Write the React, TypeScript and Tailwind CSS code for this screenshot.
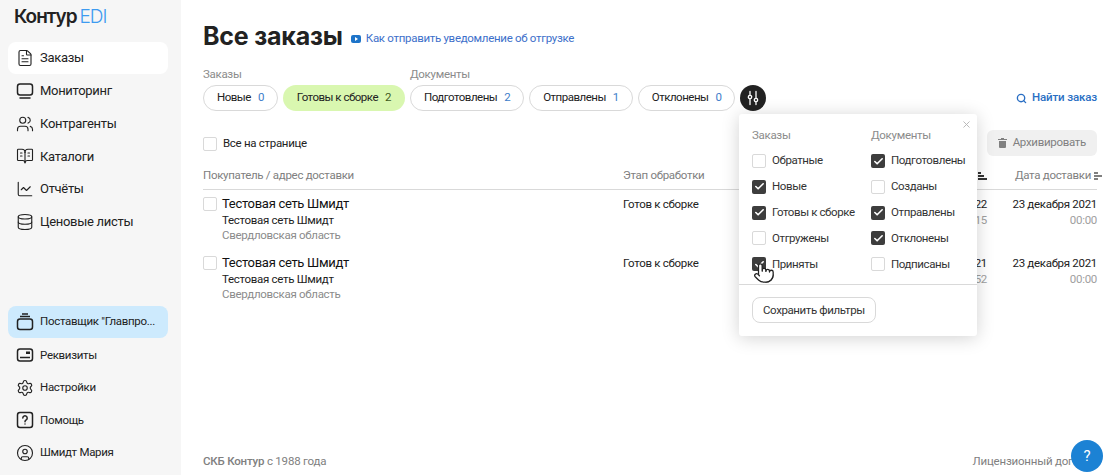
import { BookOpenText, ChartLine, Check, CircleUser, Database, FileText, Pointer, Search, Settings, Users, X } from 'lucide-react'
import type { ReactNode } from 'react'

const ICON = { size: 18, strokeWidth: 1.5 }

const Monitor = () => (
  <svg width="18" height="18" viewBox="0 0 18 18" fill="none" stroke="currentColor" strokeWidth="1.5">
    <rect x="1.5" y="2" width="15" height="11" rx="2.5" />
    <path d="M4 16h10" strokeLinecap="round" />
  </svg>
)

const Account = () => (
  <svg width="18" height="18" viewBox="0 0 18 18" fill="none" stroke="currentColor" strokeWidth="1.5">
    <rect x="1.5" y="6" width="15" height="10.5" rx="2.5" />
    <path d="M4 3.5h10M6 1h6" />
  </svg>
)

const Requisites = () => (
  <svg width="18" height="18" viewBox="0 0 18 18" fill="none" stroke="currentColor" strokeWidth="1.5">
    <rect x="1.5" y="3" width="15" height="12" rx="2.5" />
    <path d="M4 11.5h10" />
    <rect x="10" y="5.5" width="4" height="2.5" fill="currentColor" stroke="none" />
  </svg>
)

const HelpSquare = () => (
  <svg width="18" height="18" viewBox="0 0 18 18" fill="none" stroke="currentColor" strokeWidth="1.5">
    <rect x="1.5" y="1.5" width="15" height="15" rx="2.5" />
    <path d="M6.8 7a2.2 2.2 0 1 1 3.4 1.9c-.8.5-1.2.9-1.2 1.9" strokeLinecap="round" />
    <path d="M9 12.6v1" />
  </svg>
)

const Sliders = () => (
  <svg width="14" height="16" viewBox="0 0 14 16" fill="none" stroke="currentColor" strokeWidth="1.3" strokeLinecap="round">
    <path d="M4 1.5v3.5M4 9v5.5M10 1.5V8M10 12v2.5" />
    <circle cx="4" cy="7" r="1.7" />
    <circle cx="10" cy="10" r="1.7" />
  </svg>
)

const TrashSolid = () => (
  <svg width="9" height="10" viewBox="0 0 9 10" fill="currentColor">
    <path d="M3 0h3v1h3v1H0V1h3zM1 3h7v6a1 1 0 0 1-1 1H2a1 1 0 0 1-1-1z" />
  </svg>
)

const SortIcon = ({ flip }: { flip?: boolean }) => (
  <svg width="9" height="8" viewBox="0 0 9 8" fill="currentColor">
    {flip ? (
      <path d="M0 0h4v2H0zM0 3h8v2H0zM0 6h4v2H0z" />
    ) : (
      <path d="M0 0h3v2H0zM0 3h6v2H0zM0 6h9v2H0z" />
    )}
  </svg>
)

const NAV: { label: string; icon: ReactNode; active?: boolean }[] = [
  { label: 'Заказы', icon: <FileText {...ICON} />, active: true },
  { label: 'Мониторинг', icon: <Monitor /> },
  { label: 'Контрагенты', icon: <Users {...ICON} /> },
  { label: 'Каталоги', icon: <BookOpenText {...ICON} /> },
  { label: 'Отчёты', icon: <ChartLine {...ICON} /> },
  { label: 'Ценовые листы', icon: <Database {...ICON} /> },
]

const NAV_BOTTOM: { label: string; icon: ReactNode }[] = [
  { label: 'Реквизиты', icon: <Requisites /> },
  { label: 'Настройки', icon: <Settings {...ICON} /> },
  { label: 'Помощь', icon: <HelpSquare /> },
  { label: 'Шмидт Мария', icon: <CircleUser {...ICON} /> },
]

const ORDER_FILTERS = [
  { label: 'Новые', count: 0 },
  { label: 'Готовы к сборке', count: 2, active: true },
]

const DOC_FILTERS = [
  { label: 'Подготовлены', count: 2 },
  { label: 'Отправлены', count: 1 },
  { label: 'Отклонены', count: 0 },
]

const POPUP_ORDERS = [
  { label: 'Обратные', on: false },
  { label: 'Новые', on: true },
  { label: 'Готовы к сборке', on: true },
  { label: 'Отгружены', on: false },
  { label: 'Приняты', on: true },
]

const POPUP_DOCS = [
  { label: 'Подготовлены', on: true },
  { label: 'Созданы', on: false },
  { label: 'Отправлены', on: true },
  { label: 'Отклонены', on: true },
  { label: 'Подписаны', on: false },
]

const ROWS = [
  { date: '20 января 2022', time: '10:15' },
  { date: '23 декабря 2021', time: '14:52' },
]

function Box({ on }: { on?: boolean }) {
  if (on) {
    return (
      <span className="flex h-[14px] w-[14px] shrink-0 items-center justify-center rounded-[2px] bg-[#3d3d3d] text-white">
        <Check size={11} strokeWidth={3.5} />
      </span>
    )
  }
  return <span className="block h-[14px] w-[14px] shrink-0 rounded-[2px] border border-[#d9d9d9] bg-white" />
}

function Pill({ label, count, active }: { label: string; count: number; active?: boolean }) {
  return (
    <span
      className={`flex h-[26px] items-center gap-[7px] rounded-full tracking-[-0.5px] ${
        active ? 'bg-[#d9f7b0] px-[14px] text-[#222]' : 'border border-[#d9d9d9] px-[13px] text-[#222]'
      }`}
    >
      {label}
      <span className={active ? 'text-[#3d5a1e]' : 'text-[#3d7dca]'}>{count}</span>
    </span>
  )
}

function PopupColumn({ title, items, width }: { title: string; items: { label: string; on: boolean }[]; width: string }) {
  return (
    <div className={`shrink-0 ${width}`}>
      <div className="mb-[12px] leading-[14px] text-[#8b8b8b]">{title}</div>
      <div className="flex flex-col gap-[11.8px]">
        {items.map((item) => (
          <label key={item.label} className="flex h-[14px] items-center gap-[6px] whitespace-nowrap tracking-[-0.4px] text-[#333]">
            <Box on={item.on} />
            {item.label}
          </label>
        ))}
      </div>
    </div>
  )
}

export default function App() {
  return (
    <div className="relative flex h-[475px] w-[1106px] overflow-hidden bg-white font-['Roboto',sans-serif] text-[11.5px] tracking-[-0.3px] text-[#222]">
      <aside className="flex w-[181px] shrink-0 flex-col bg-[#f6f6f6] pr-[13px] pl-2">
        <div className="flex h-[42px] items-center gap-[3px] pb-[8px] pl-[6px] font-['Inter',sans-serif] text-[19px] tracking-[-1px]">
          <span className="font-semibold">Контур</span>
          <span className="font-light text-[#3d9bf0]">EDI</span>
        </div>
        <nav className="flex flex-col gap-[0.8px] text-[13px]">
          {NAV.map((item) => (
            <a
              key={item.label}
              className={`flex h-[32px] items-center gap-[6px] rounded-lg pl-[8px] ${item.active ? 'bg-white' : ''}`}
            >
              {item.icon}
              {item.label}
            </a>
          ))}
        </nav>
        <div className="mt-auto flex flex-col gap-[0.6px] pb-[6px]">
          <a className="mb-[0.5px] flex h-[32px] items-center gap-[6px] rounded-lg bg-[#cdeafd] pl-[8px]">
            <Account />
            Поставщик "Главпро...
          </a>
          {NAV_BOTTOM.map((item, i) => (
            <a key={item.label} className={`flex h-[32px] items-center gap-[6px] pl-[8px] ${i === 0 ? 'mt-[0.5px]' : ''}`}>
              {item.icon}
              {item.label}
            </a>
          ))}
        </div>
      </aside>

      <main className="flex min-w-0 flex-1 flex-col pr-[9px] pl-[22px]">
        <div className="flex items-center gap-2 pt-[18px]">
          <h1 className="font-['Inter',sans-serif] text-[25px] leading-[36px] font-bold tracking-[-0.2px]">Все заказы</h1>
          <a className="mt-[5px] flex items-center gap-[5px] text-[#3d6fca]">
            <svg width="10" height="8" viewBox="0 0 10 8">
              <rect width="10" height="8" rx="2" fill="#1d74c9" />
              <path d="M4 2l3 2-3 2z" fill="#fff" />
            </svg>
            Как отправить уведомление об отгрузке
          </a>
        </div>

        <div className="mt-[13px] flex items-end">
          <div className="mr-[5px]">
            <div className="mb-[4px] leading-[14px] text-[#8b8b8b]">Заказы</div>
            <div className="flex gap-[5px]">
              {ORDER_FILTERS.map((f) => (
                <Pill key={f.label} {...f} />
              ))}
            </div>
          </div>
          <div>
            <div className="mb-[4px] leading-[14px] text-[#8b8b8b]">Документы</div>
            <div className="flex gap-[5px]">
              {DOC_FILTERS.map((f) => (
                <Pill key={f.label} {...f} />
              ))}
              <button className="flex h-[26px] w-[26px] items-center justify-center rounded-full bg-[#222] text-white">
                <Sliders />
              </button>
            </div>
          </div>
          <a className="ml-auto flex h-[26px] items-center gap-[5px] font-medium tracking-[-0.15px] text-[#2a6fc4]">
            <Search size={11} strokeWidth={3} />
            Найти заказ
          </a>
        </div>

        <div className="mt-[19px] flex h-[26px] items-center justify-between">
          <label className="flex items-center gap-[6px] pt-px">
            <Box />
            Все на странице
          </label>
          <button className="flex h-[26px] items-center gap-[6px] rounded-md bg-[#f0f0f0] px-[11px] text-[#808080]">
            <TrashSolid />
            Архивировать
          </button>
        </div>

        <div className="mt-[8px] grid h-[26px] grid-cols-[420px_1fr_140px_110px] items-center border-b border-[#d9d9d9] pb-[2px] text-[#808080]">
          <span>Покупатель / адрес доставки</span>
          <span>Этап обработки</span>
          <span className="flex items-center justify-end gap-1">
            Дата заказа
            <span className="text-[#333]"><SortIcon /></span>
          </span>
          <span className="-mr-[6px] flex items-center justify-end gap-[3px] whitespace-nowrap">
            Дата доставки
            <SortIcon flip />
          </span>
        </div>

        {ROWS.map((row) => (
          <div key={row.time} className="grid h-[59px] grid-cols-[420px_1fr_140px_110px] pt-[6px]">
            <div className="flex gap-[5px]">
              <span className="mt-[1px] block"><Box /></span>
              <div>
                <div className="text-[13px] leading-[16px] text-[#111]">Тестовая сеть Шмидт</div>
                <div className="mt-[1px] leading-[15px]">Тестовая сеть Шмидт</div>
                <div className="leading-[15px] text-[#8b8b8b]">Свердловская область</div>
              </div>
            </div>
            <div className="leading-[16px]">Готов к сборке</div>
            <div className="text-right leading-[16px]">
              {row.date}
              <div className="text-[#a0a0a0]">{row.time}</div>
            </div>
            <div className="text-right leading-[16px]">
              23 декабря 2021
              <div className="text-[#a0a0a0]">00:00</div>
            </div>
          </div>
        ))}

        <footer className="mt-auto flex justify-between pb-[7px] leading-[14px] tracking-[-0.2px] text-[#808080]">
          <span><b className="font-medium">СКБ Контур</b> с 1988 года</span>
          <span className="-mr-[1px] whitespace-nowrap">Лицензионный договор</span>
        </footer>
      </main>

      {/* filter popup */}
      <div className="absolute top-[114px] left-[739px] h-[222px] w-[238px] rounded-[3px] bg-white shadow-[0_2px_18px_rgba(0,0,0,0.18)]">
        <X size={11} className="absolute top-[5px] right-[5px] text-[#b5b5b5]" />
        <div className="flex px-[13px] pt-[14px]">
          <PopupColumn title="Заказы" items={POPUP_ORDERS} width="w-[119px]" />
          <PopupColumn title="Документы" items={POPUP_DOCS} width="w-[93px]" />
        </div>
        <div className="mt-[13px] border-t border-[#d9d9d9] px-[13px] pt-[12px]">
          <button className="h-[26px] rounded-lg border border-[#d9d9d9] px-[10px] tracking-[-0.4px] text-[#333]">Сохранить фильтры</button>
        </div>
        <Pointer size={22} strokeWidth={1.4} fill="#fff" className="absolute top-[148px] left-[14px] text-[#222]" />
      </div>

      <button className="absolute top-[440px] left-[1071px] flex h-[32px] w-[32px] items-center justify-center rounded-full bg-[#1c82d4] text-[15px] text-white">
        ?
      </button>
    </div>
  )
}
